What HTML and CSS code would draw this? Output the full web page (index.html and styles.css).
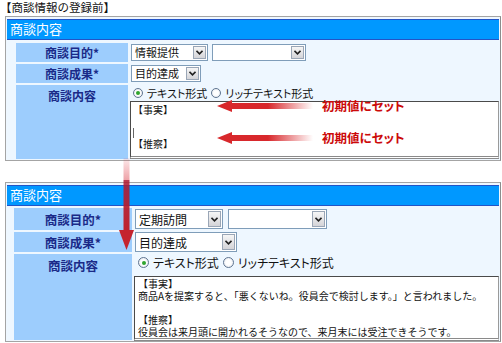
FILE: index.html
```html
<!DOCTYPE html>
<html lang="ja">
<head>
    <meta charset="UTF-8">
    <title>商談情報の登録前</title>
    <link rel="stylesheet" href="styles.css">
</head>
<body>
    <div class="caption">【商談情報の登録前】</div>

    <!-- before: default values are set -->
    <div class="panel">
        <div class="panel-head">商談内容</div>
        <div class="form">
            <div class="label">商談目的*</div>
            <div class="value">
                <div class="select w-77"><span class="select-text">情報提供</span><span class="select-btn"><svg width="7" height="5" viewBox="0 0 7 5"><polyline points="0.5,0.8 3.5,3.8 6.5,0.8" fill="none" stroke="#222" stroke-width="1.6"/></svg></span></div>
                <div class="select w-94"><span class="select-text"></span><span class="select-btn"><svg width="7" height="5" viewBox="0 0 7 5"><polyline points="0.5,0.8 3.5,3.8 6.5,0.8" fill="none" stroke="#222" stroke-width="1.6"/></svg></span></div>
            </div>
            <div class="label">商談成果*</div>
            <div class="value">
                <div class="select w-70"><span class="select-text">目的達成</span><span class="select-btn"><svg width="7" height="5" viewBox="0 0 7 5"><polyline points="0.5,0.8 3.5,3.8 6.5,0.8" fill="none" stroke="#222" stroke-width="1.6"/></svg></span></div>
            </div>
            <div class="label label-top">商談内容</div>
            <div class="value value-col">
                <div class="radios">
                    <span class="radio checked"></span><span class="radio-text">テキスト形式</span>
                    <span class="radio"></span><span class="radio-text">リッチテキスト形式</span>
                </div>
                <div class="memo">
                    <div>【事実】</div>
                    <div>&nbsp;</div>
                    <div><span class="caret"></span></div>
                    <div>【推察】</div>
                </div>
            </div>
        </div>
    </div>

    <!-- after: user input -->
    <div class="panel panel-large">
        <div class="panel-head">商談内容</div>
        <div class="form">
            <div class="label">商談目的*</div>
            <div class="value">
                <div class="select w-88"><span class="select-text">定期訪問</span><span class="select-btn"><svg width="7" height="5" viewBox="0 0 7 5"><polyline points="0.5,0.8 3.5,3.8 6.5,0.8" fill="none" stroke="#222" stroke-width="1.6"/></svg></span></div>
                <div class="select w-99"><span class="select-text"></span><span class="select-btn"><svg width="7" height="5" viewBox="0 0 7 5"><polyline points="0.5,0.8 3.5,3.8 6.5,0.8" fill="none" stroke="#222" stroke-width="1.6"/></svg></span></div>
            </div>
            <div class="label">商談成果*</div>
            <div class="value">
                <div class="select w-102"><span class="select-text">目的達成</span><span class="select-btn"><svg width="7" height="5" viewBox="0 0 7 5"><polyline points="0.5,0.8 3.5,3.8 6.5,0.8" fill="none" stroke="#222" stroke-width="1.6"/></svg></span></div>
            </div>
            <div class="label label-top">商談内容</div>
            <div class="value value-col">
                <div class="radios">
                    <span class="radio checked"></span><span class="radio-text">テキスト形式</span>
                    <span class="radio"></span><span class="radio-text">リッチテキスト形式</span>
                </div>
                <div class="memo">
                    <div>【事実】</div>
                    <div>商品Aを提案すると、「悪くないね。役員会で検討します。」と言われました。</div>
                    <div>&nbsp;</div>
                    <div>【推察】</div>
                    <div>役員会は来月頭に開かれるそうなので、来月末には受注できそうです。</div>
                </div>
            </div>
        </div>
    </div>

    <!-- callouts drawn over the screenshots -->
    <svg class="arrow-left arrow-1" width="96" height="12" viewBox="0 0 96 12">
        <defs>
            <linearGradient id="fadeRight" x1="0" y1="0" x2="1" y2="0">
                <stop offset="0" stop-color="#d8282c"/>
                <stop offset="0.45" stop-color="#d8282c"/>
                <stop offset="1" stop-color="#d8282c" stop-opacity="0"/>
            </linearGradient>
        </defs>
        <polygon points="0,6 15,0 15,12" fill="#d8282c"/>
        <rect x="14" y="3" width="82" height="6" fill="url(#fadeRight)"/>
    </svg>
    <div class="note note-1">初期値にセット</div>

    <svg class="arrow-left arrow-2" width="96" height="12" viewBox="0 0 96 12">
        <polygon points="0,6 15,0 15,12" fill="#d8282c"/>
        <rect x="14" y="3" width="82" height="6" fill="url(#fadeRight)"/>
    </svg>
    <div class="note note-2">初期値にセット</div>

    <svg class="arrow-down" width="15" height="93" viewBox="0 0 15 93">
        <defs>
            <linearGradient id="fadeDown" x1="0" y1="0" x2="0" y2="1">
                <stop offset="0" stop-color="#e0303c" stop-opacity="0.1"/>
                <stop offset="0.3" stop-color="#d8303c" stop-opacity="0.45"/>
                <stop offset="0.3" stop-color="#b01830" stop-opacity="0.85"/>
                <stop offset="1" stop-color="#c0202c" stop-opacity="1"/>
            </linearGradient>
        </defs>
        <rect x="4.5" y="0" width="6" height="74" fill="url(#fadeDown)"/>
        <polygon points="0,72 15,72 7.5,92" fill="#c4242e"/>
    </svg>
</body>
</html>
```

FILE: styles.css
```css
* {
    box-sizing: border-box;
    margin: 0;
    padding: 0;
}

body {
    font-family: "Noto Sans CJK JP", sans-serif;
    background-color: #fff;
    color: #111;
    width: 502px;
    height: 343px;
    overflow: hidden;
    position: relative;
}

.caption {
    font-size: 11.5px;
    line-height: 15px;
    height: 16px;
}

/* panel */
.panel {
    margin-left: 5px;
    width: 496px;
    border: 1px solid #a4a4a4;
    border-right-color: #8c8c8c;
    background-color: #eef7ff;
    padding: 2px 0 1px 0;
}

.panel-head {
    margin: 0 1px;
    height: 21px;
    background-color: #0098ff;
    border-top: 1px solid #2454c6;
    border-bottom: 1px solid #2454c6;
    color: #fff;
    font-size: 13px;
    line-height: 18px;
    padding-left: 3px;
}

.form {
    display: grid;
    grid-template-columns: 112px 1fr;
    grid-template-rows: 19px 19px 74px;
    gap: 2px;
    margin-top: 3px;
    padding-left: 10px;
}

.label {
    background-color: #9dcdfd;
    color: #1a2a88;
    font-size: 12px;
    font-weight: bold;
    text-align: center;
    display: flex;
    align-items: center;
    justify-content: center;
}

.label-top {
    align-items: flex-start;
    padding-top: 2px;
}

.value {
    display: flex;
    align-items: center;
    gap: 4px;
    padding-left: 1px;
}

.value-col {
    flex-direction: column;
    align-items: stretch;
    gap: 0;
    padding-left: 0;
}

/* select */
.select {
    display: flex;
    align-items: center;
    justify-content: space-between;
    height: 17px;
    background-color: #fff;
    border: 1px solid #7f9db9;
    padding: 0 1px 0 3px;
}

.select-text {
    font-size: 11px;
    line-height: 15px;
}

.select-btn {
    width: 13px;
    height: 13px;
    border: 1px solid #9aa6b6;
    background: linear-gradient(#f6f6f6, #d4d4d8);
    display: flex;
    align-items: center;
    justify-content: center;
}

.w-70 { width: 70px; }
.w-77 { width: 77px; }
.w-94 { width: 94px; }
.w-88 { width: 88px; }
.w-99 { width: 99px; }
.w-102 { width: 102px; }

/* radio row */
.radios {
    display: flex;
    align-items: center;
    height: 16px;
    font-size: 11px;
    font-feature-settings: "palt";
    padding-left: 3px;
}

.radio {
    width: 10px;
    height: 10px;
    border-radius: 50%;
    border: 1px solid #5f7591;
    background: radial-gradient(#fff 40%, #d8dde6);
    display: flex;
    align-items: center;
    justify-content: center;
    margin-right: 4px;
}

.radio.checked::after {
    content: "";
    width: 4px;
    height: 4px;
    border-radius: 50%;
    background-color: #2fa52f;
}

.radio-text {
    margin-right: 4px;
}

/* memo box */
.memo {
    height: 58px;
    background-color: #fff;
    border: 1px solid #4a4a4a;
    border-right-color: #9a9a9a;
    border-bottom: 3px double #8a8a8a;
    font-size: 10px;
    line-height: 11px;
    padding: 2px 0 0 2px;
    margin-right: 1px;
}

.caret {
    display: inline-block;
    width: 1px;
    height: 10px;
    background-color: #666;
    vertical-align: middle;
}

/* second panel is a slightly larger capture */
.panel-large {
    margin-top: 21px;
}

.panel-large .form {
    grid-template-columns: 118px 1fr;
    grid-template-rows: 22px 20px 86px;
    margin-top: 2px;
    padding-left: 8px;
}

.panel-large .label {
    font-size: 12.5px;
}

.panel-large .value {
    padding-left: 1px;
    gap: 5px;
}

.panel-large .value-col {
    padding-left: 0;
}

.panel-large .select {
    height: 20px;
}

.panel-large .select-text {
    font-size: 12px;
}

.panel-large .select-btn {
    height: 16px;
}

.panel-large .radios {
    height: 18px;
    font-size: 12px;
    padding-left: 4px;
}

.panel-large .radio {
    width: 11px;
    height: 11px;
}

.panel-large .memo {
    height: 66px;
    font-size: 10px;
    line-height: 12px;
    padding: 1px 0 0 3px;
}

/* callouts */
.arrow-left {
    position: absolute;
    left: 217px;
}

.arrow-1 { top: 100px; }
.arrow-2 { top: 132px; }

.note {
    position: absolute;
    left: 322px;
    color: #cc0a0a;
    font-size: 12.5px;
    font-weight: bold;
    font-feature-settings: "palt";
    line-height: 14px;
}

.note-1 { top: 99px; }
.note-2 { top: 131px; }

.arrow-down {
    position: absolute;
    left: 119px;
    top: 158px;
}
```
